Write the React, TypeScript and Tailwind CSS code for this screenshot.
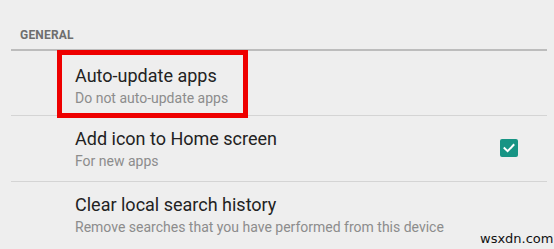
import React from 'react';

interface SettingRow {
  title: string;
  summary: string;
  checked?: boolean;
}

const rows: SettingRow[] = [
  { title: 'Auto-update apps', summary: 'Do not auto-update apps' },
  { title: 'Add icon to Home screen', summary: 'For new apps', checked: true },
  { title: 'Clear local search history', summary: 'Remove searches that you have performed from this device' },
];

function Checkbox() {
  return (
    <div className="w-[18px] h-[18px] rounded-[2px] bg-[#179484] flex items-center justify-center">
      <svg width="14" height="14" viewBox="0 0 14 14" fill="none">
        <path d="M2.5 7.2 L5.6 10.2 L11.5 4" stroke="white" strokeWidth="2" strokeLinecap="square" />
      </svg>
    </div>
  );
}

export default function App() {
  return (
    <div
      className="relative w-[554px] h-[249px] bg-[#eeeeee] overflow-hidden"
      style={{ fontFamily: 'Roboto, "Noto Sans", sans-serif' }}
    >
      <div className="pl-[11px] pr-[7px]">
        {/* Category header */}
        <div className="h-[51px] pl-[9px] pt-[28px] border-b-2 border-[#bcbcbc] text-[12px] leading-[14px] font-bold text-[#6e6e6e] tracking-[0.2px]">
          GENERAL
        </div>

        {rows.map((row, i) => (
          <div
            key={row.title}
            className={`flex items-start pl-[64px] pr-[29px] ${
              i === 0 ? 'pt-[15px] h-[65px]' : 'pt-[13px] h-[66px]'
            } ${i < rows.length - 1 ? 'border-b border-[#d4d4d4]' : ''}`}
          >
            <div className="flex-1 min-w-0">
              <div className="text-[18px] leading-[20px] text-[#222222] whitespace-nowrap">{row.title}</div>
              <div className="mt-[4px] text-[14px] leading-[16px] text-[#8c8c8c] whitespace-nowrap">{row.summary}</div>
            </div>
            {row.checked && (
              <div className="mt-[10px]">
                <Checkbox />
              </div>
            )}
          </div>
        ))}
      </div>

      {/* red highlight */}
      <div className="absolute left-[57px] top-[50px] w-[191px] h-[68px] border-[5px] border-[#ee0000]" />

      {/* watermark */}
      <div
        className="absolute left-[480px] top-[231px] text-[13px] leading-[16px] text-[#111111]"
        style={{ fontFamily: '"DejaVu Sans", sans-serif' }}
      >
        wsxdn.com
      </div>
    </div>
  );
}
